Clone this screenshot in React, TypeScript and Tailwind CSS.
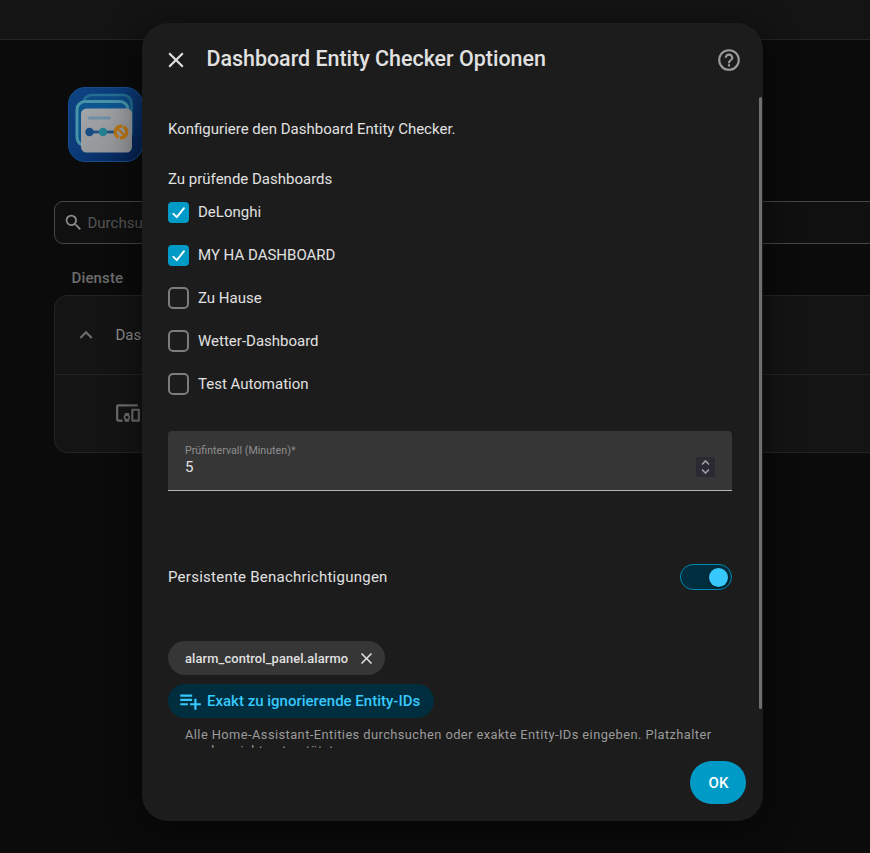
import React, { useState } from 'react';

const icons = {
  close: 'M19,6.41L17.59,5L12,10.59L6.41,5L5,6.41L10.59,12L5,17.59L6.41,19L12,13.41L17.59,19L19,17.59L13.41,12L19,6.41Z',
  help: 'M11,18H13V16H11V18M12,2A10,10 0 0,0 2,12A10,10 0 0,0 12,22A10,10 0 0,0 22,12A10,10 0 0,0 12,2M12,20C7.59,20 4,16.41 4,12C4,7.59 7.59,4 12,4C16.41,4 20,7.59 20,12C20,16.41 16.41,20 12,20M12,6A4,4 0 0,0 8,10H10A2,2 0 0,1 12,8A2,2 0 0,1 14,10C14,12 11,11.75 11,15H13C13,12.75 16,12.5 16,10A4,4 0 0,0 12,6Z',
  magnify: 'M9.5,3A6.5,6.5 0 0,1 16,9.5C16,11.11 15.41,12.59 14.44,13.73L14.71,14H15.5L20.5,19L19,20.5L14,15.5V14.71L13.73,14.44C12.59,15.41 11.11,16 9.5,16A6.5,6.5 0 0,1 3,9.5A6.5,6.5 0 0,1 9.5,3M9.5,5C7,5 5,7 5,9.5C5,12 7,14 9.5,14C12,14 14,12 14,9.5C14,7 12,5 9.5,5Z',
  chevronUp: 'M7.41,15.41L12,10.83L16.59,15.41L18,14L12,8L6,14L7.41,15.41Z',
  devices: 'M3 6H21V4H3A2 2 0 0 0 1 6V18A2 2 0 0 0 3 20H7V18H3M13 12H9V13.78A3 3 0 0 0 9 18.22V20H13V18.22A3 3 0 0 0 13 13.78M11 17.5A1.5 1.5 0 1 1 12.5 16 1.5 1.5 0 0 1 11 17.5M22 8H16A1 1 0 0 0 15 9V19A1 1 0 0 0 16 20H22A1 1 0 0 0 23 19V9A1 1 0 0 0 22 8M21 18H17V10H21Z',
  playlistPlus: 'M3 16H10V14H3M18 14V10H16V14H12V16H16V20H18V16H22V14M14 6H3V8H14M14 10H3V12H14V10Z',
};

interface IconProps {
  path: string;
  className?: string;
}

const Icon: React.FC<IconProps> = ({ path, className }) => (
  <svg viewBox="0 0 24 24" fill="currentColor" className={className}>
    <path d={path} />
  </svg>
);

const IntegrationLogo: React.FC = () => (
  <svg viewBox="0 0 75 75" className="size-[75px]">
    <defs>
      <linearGradient id="logoBg" x1="0" y1="0" x2="1" y2="1">
        <stop offset="0" stopColor="#0d4383" />
        <stop offset="0.5" stopColor="#0b3a78" />
        <stop offset="1" stopColor="#041f4d" />
      </linearGradient>
      <linearGradient id="logoCard" x1="0" y1="0" x2="1" y2="1">
        <stop offset="0" stopColor="#a2a5a9" />
        <stop offset="1" stopColor="#8f9193" />
      </linearGradient>
    </defs>
    <rect x="0.5" y="0.5" width="74" height="74" rx="16.5" fill="url(#logoBg)" stroke="#164c8c" />
    <rect x="15.5" y="8" width="48" height="46" rx="8" fill="#0d4a86" stroke="#236f92" strokeWidth="2.5" />
    <rect x="9" y="14.5" width="51" height="44" rx="8" fill="#0d5590" stroke="#4793a8" strokeWidth="3" />
    <rect x="13" y="21.5" width="51" height="44" rx="5.5" fill="url(#logoCard)" />
    <rect x="20" y="29.5" width="23" height="3" rx="1.5" fill="#6f8fa6" />
    <path d="M21 45H46" stroke="#1f4f85" strokeWidth="2.8" />
    <circle cx="21.5" cy="45" r="4.2" fill="#184c87" />
    <circle cx="35" cy="45" r="4.2" fill="#247f8f" />
    <circle cx="53" cy="45" r="5.8" fill="none" stroke="#b8720f" strokeWidth="3.2" />
    <path d="M49.500 41.500L56.500 48.500" stroke="#b8720f" strokeWidth="2.4" />
    <path d="M50.500 53.500L51.500 49.500M54.500 40.500L55.500 36.500" stroke="#97999b" strokeWidth="1.4" />
  </svg>
);

const BackgroundPage: React.FC = () => (
  <div className="h-full bg-[#0b0b0b]">
    <header className="h-10 border-b border-[#242424] bg-[#141414]" />
    <div className="pt-[47.400px] pl-[54px]">
      <div className="pl-[14.400px]">
        <IntegrationLogo />
      </div>
      <div className="mt-[38.600px] flex h-[43px] w-[900px] items-center rounded-[9px] border border-[#464646] bg-[#101010] pl-2">
        <Icon path={icons.magnify} className="size-[21px] text-[#8b8b8b]" />
        <span className="mt-px ml-[3.500px] text-[15px] text-[#555]">Durchsuchen</span>
      </div>
      <h2 className="mt-6 ml-[17.500px] text-[15px] leading-[20px] font-medium tracking-[0.150px] text-[#6d6d6d]">Dienste</h2>
      <div className="mt-[7px] h-[158px] w-[900px] rounded-[13px] border border-[#242424] bg-[#141414]">
        <div className="flex h-[79px] items-center border-b border-[#242424] pl-[18px]">
          <Icon path={icons.chevronUp} className="size-[26px] text-[#6d6d6d]" />
          <span className="ml-[16.500px] text-[15px] text-[#8d8d8d]">Dashboard</span>
        </div>
        <div className="flex h-[76px] items-center pl-[60px]">
          <Icon path={icons.devices} className="size-[26px] text-[#6d6d6d]" />
        </div>
      </div>
    </div>
  </div>
);

interface CheckboxRowProps {
  label: string;
  checked: boolean;
  onToggle: () => void;
}

const CheckboxRow: React.FC<CheckboxRowProps> = ({ label, checked, onToggle }) => (
  <li>
    <button onClick={onToggle} className="flex h-[43px] items-center gap-[9px]">
      {checked ? (
        <span className="flex size-[21px] items-center justify-center rounded-[4px] bg-[#009ac7]">
          <svg viewBox="0 0 21 21" className="size-[21px]" fill="none" stroke="#fff" strokeWidth="1.900" strokeLinecap="round" strokeLinejoin="round">
            <path d="M5.400 11.800L8.800 15.200L16 6.200" />
          </svg>
        </span>
      ) : (
        <span className="mb-px h-[22px] w-[21px] rounded-[5px] border-2 border-[#7c7c7c]" />
      )}
      <span className="text-[15px]">{label}</span>
    </button>
  </li>
);

const initialDashboards = [
  { name: 'DeLonghi', checked: true },
  { name: 'MY HA DASHBOARD', checked: true },
  { name: 'Zu Hause', checked: false },
  { name: 'Wetter-Dashboard', checked: false },
  { name: 'Test Automation', checked: false },
];

const App: React.FC = () => {
  const [dashboards, setDashboards] = useState(initialDashboards);
  const [notify, setNotify] = useState(true);

  const toggleDashboard = (name: string) => {
    setDashboards(dashboards.map(d => (d.name === name ? { ...d, checked: !d.checked } : d)));
  };

  return (
    <div className="relative h-[853px] w-[870px] overflow-hidden font-['Roboto',sans-serif]">
      <BackgroundPage />

      {/* Options dialog */}
      <div className="absolute top-[23px] left-[142px] flex h-[798px] w-[621px] flex-col overflow-hidden rounded-[26px] bg-[#1c1c1c] text-[#e1e1e1] shadow-[0_8px_30px_6px_rgba(0,0,0,0.4)]">
        <header className="flex h-[74px] shrink-0 items-center pr-[21px] pl-[21px]">
          <button title="Schließen">
            <Icon path={icons.close} className="size-[26px]" />
          </button>
          <h1 className="mb-[2px] ml-[17.400px] flex-1 text-[21.450px] leading-7 font-medium">Dashboard Entity Checker Optionen</h1>
          <button title="Hilfe">
            <Icon path={icons.help} className="size-[26px] text-[#9b9b9b]" />
          </button>
        </header>

        <div className="flex min-h-0 flex-1">
          <main className="h-full flex-1 overflow-hidden pr-[27px] pl-[26px]">
            <p className="mt-[21px] text-[15px] leading-[22px]">Konfiguriere den Dashboard Entity Checker.</p>
            <p className="mt-7 text-[15px] leading-[22px]">Zu prüfende Dashboards</p>
            <ul className="mt-px">
              {dashboards.map(d => (
                <CheckboxRow key={d.name} label={d.name} checked={d.checked} onToggle={() => toggleDashboard(d.name)} />
              ))}
            </ul>

            <div className="mt-[25px] flex h-[60px] items-center justify-between rounded-t-[4px] border-b border-[#b0b5b3] bg-[#363636] pr-[17px] pl-[17px]">
              <div className="flex flex-col">
                <label className="text-[10.700px] leading-[14px] text-[#8f8f8f]">Prüfintervall (Minuten)*</label>
                <span className="-mt-px mb-px text-[15px] leading-5">5</span>
              </div>
              <div className="mt-[13px] flex h-5 w-[19px] items-center justify-center bg-[#2b2a33]">
                <svg viewBox="0 0 10 16" className="h-4 w-[10px]" fill="none" stroke="#a09fa8" strokeWidth="1.600">
                  <path d="M1 5.500L4.500 2L8 5.500M1 10.500L4.500 14L8 10.500" />
                </svg>
              </div>
            </div>

            <div className="mt-[73px] flex h-[26px] items-center justify-between">
              <span className="text-[15px] tracking-[0.250px]">Persistente Benachrichtigungen</span>
              <button
                onClick={() => setNotify(!notify)}
                className={`flex h-[26px] w-[52px] items-center rounded-full border border-[#0089b3] bg-[#002e3e] px-[3px] ${notify ? 'justify-end' : 'justify-start'}`}
              >
                <span className="size-[19px] rounded-full bg-[#37c8fd] shadow-[0_1px_3px_rgba(0,0,0,0.5)]" />
              </button>
            </div>

            {/* Ignored entities */}
            <div className="mt-[51px] flex h-[34px] w-[217px] items-center rounded-full bg-[#363636] pl-[17px]">
              <span className="mt-px text-[12.850px] font-medium tracking-[0.130px]">alarm_control_panel.alarmo</span>
              <Icon path={icons.close} className="mt-px ml-[9px] size-[19px]" />
            </div>
            <button className="mt-[9px] flex h-[34px] w-[266px] items-center rounded-full bg-[#002e3e] pl-[9px] text-[#37c8fd]">
              <Icon path={icons.playlistPlus} className="size-[26px]" />
              <span className="ml-1 text-[15px] font-medium whitespace-nowrap">Exakt zu ignorierende Entity-IDs</span>
            </button>
            <p className="mt-[9px] pl-[17px] text-[12.850px] leading-[16px] tracking-[0.430px] whitespace-nowrap text-[#9b9b9b]">
              Alle Home-Assistant-Entities durchsuchen oder exakte Entity-IDs eingeben. Platzhalter
              <br />
              werden nicht unterstützt.
            </p>
          </main>
          <div className="mr-px h-[612px] w-[3px] shrink-0 rounded-full bg-[#6f6f6f]" />
        </div>

        <footer className="flex h-[73px] shrink-0 items-start justify-end border-t border-[#191919] pt-3 pr-[17px]">
          <button className="h-[43px] w-14 rounded-full bg-[#009ac7] pt-px pl-px text-[15px] font-medium text-white">OK</button>
        </footer>
      </div>
    </div>
  );
};

export default App;
